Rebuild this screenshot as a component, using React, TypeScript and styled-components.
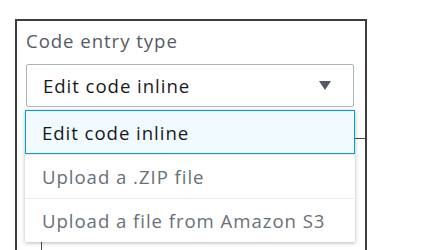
import styled, { createGlobalStyle } from "styled-components";

const GlobalStyle = createGlobalStyle`
    body {
        margin: 0;
        background: #fff;
        font-family: "Open Sans", "Noto Sans", sans-serif;
    }
`;

const Frame = styled("div")`
    position: relative;
    box-sizing: border-box;
    margin: 19px 0 0 15px;
    width: 352px;
    height: 240px;
    padding: 8px 11px 0 9px;
    border: 2px solid #3d3d3d;
    border-bottom: none;
    overflow: hidden;
    font-size: 18.6px;
    letter-spacing: 0.95px;
`;

const Label = styled("div")`
    line-height: 24px;
    color: #545b64;
    margin-bottom: 11px;
`;

const Select = styled("div")`
    box-sizing: border-box;
    display: flex;
    align-items: center;
    justify-content: space-between;
    height: 43px;
    padding: 0 22px 0 16px;
    border: 1px solid #aab7b8;
    border-radius: 2px;
    color: #16191f;
`;

const Arrow = styled("span")`
    width: 0;
    height: 0;
    border-left: 6px solid transparent;
    border-right: 6px solid transparent;
    border-top: 9px solid #545b64;
`;

const Editor = styled("div")`
    margin: 31px -11px 0 15px;
    height: 120px;
    border-top: 1px solid #4a4a4a;
    border-left: 1px solid #4a4a4a;
`;

const Menu = styled("ul")`
    position: absolute;
    top: 89px;
    left: 8px;
    width: 330px;
    margin: 0;
    padding: 0;
    list-style: none;
    background: #fff;
    box-shadow: 0 1px 4px rgba(0, 28, 36, 0.3);
`;

const Item = styled("li")<{ $active?: boolean }>`
    box-sizing: border-box;
    display: flex;
    align-items: center;
    height: 44px;
    padding-left: 16px;
    color: ${(p) => (p.$active ? "#16191f" : "#687078")};
    background: ${(p) => (p.$active ? "#f1faff" : "#fff")};
    border: 1px solid ${(p) => (p.$active ? "#00a1c9" : "transparent")};
    border-top-color: ${(p) => (p.$active ? "#00a1c9" : "#eaeded")};
`;

const options = ["Edit code inline", "Upload a .ZIP file", "Upload a file from Amazon S3"];

const App = () => {
    return (
        <>
            <GlobalStyle />
            <Frame>
                <Label>Code entry type</Label>
                <Select>
                    Edit code inline
                    <Arrow />
                </Select>
                <Editor />
                <Menu>
                    {options.map((o, k) => (
                        <Item key={k} $active={k == 0}>
                            {o}
                        </Item>
                    ))}
                </Menu>
            </Frame>
        </>
    );
};

export default App;
